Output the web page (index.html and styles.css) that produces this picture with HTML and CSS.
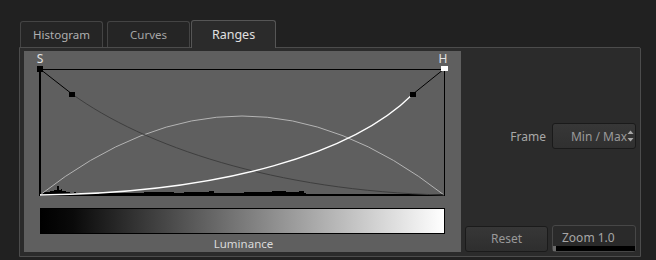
FILE: index.html
```html
<!DOCTYPE html>
<html lang="en">
<head>
  <meta charset="UTF-8" />
  <title>Ranges</title>
  <link rel="stylesheet" href="styles.css">
</head>
<body>
  <div class="tabs">
    <div class="tab">Histogram</div>
    <div class="tab">Curves</div>
    <div class="tab active">Ranges</div>
  </div>

  <div class="panel">
    <div class="graph">
      <svg class="plot" width="437" height="150" viewBox="0 0 437 150">
        <text x="16" y="12" class="lbl" text-anchor="middle">S</text>
        <text x="419" y="12" class="lbl" text-anchor="middle">H</text>

        <!-- histogram -->
        <path fill="#000" d="M16 144 L16 142 L20 142 L20 141 L26 141 L26 140 L30 140 L30 139 L33 139 L33 135 L35 135 L35 139 L37 139 L37 138 L38 138 L38 140 L42 140 L42 141 L46 141 L46 142 L50 142 L50 141 L52 141 L52 142 L56 142 L56 143 L75 143 L75 142 L120 142 L120 141 L150 141 L150 142 L160 142 L160 141 L185 141 L185 140 L190 140 L190 142 L220 142 L220 141 L248 141 L248 140 L262 140 L262 141 L275 141 L275 140 L280 140 L280 142 L282 142 L282 144 Z"/>

        <!-- box -->
        <line x1="16" y1="18.5" x2="420" y2="18.5" stroke="#000" stroke-width="1"/>
        <line x1="420.5" y1="18" x2="420.5" y2="144" stroke="#000" stroke-width="1"/>
        <line x1="16" y1="18" x2="16" y2="145" stroke="#000" stroke-width="2"/>
        <line x1="15" y1="144" x2="421" y2="144" stroke="#000" stroke-width="2"/>

        <!-- midtones -->
        <path d="M16 144 Q218 -14 420 144" fill="none" stroke="#b4b4b4" stroke-width="1"/>
        <!-- shadows -->
        <line x1="16" y1="18" x2="48" y2="43" stroke="#000" stroke-width="1"/>
        <path d="M48 43 C120 95 250 140 420 144" fill="none" stroke="#3e3e3e" stroke-width="1"/>
        <!-- highlights -->
        <path d="M16 144 C200 142 330 102 389 43" fill="none" stroke="#fff" stroke-width="1.3"/>
        <line x1="389" y1="43" x2="420" y2="18" stroke="#000" stroke-width="1"/>

        <rect x="13" y="15" width="6" height="6" fill="#000"/>
        <rect x="417" y="15" width="7" height="5" fill="#fff"/>
        <rect x="45" y="41" width="6" height="5" fill="#000"/>
        <rect x="386" y="41" width="6" height="5" fill="#000"/>
      </svg>
      <div class="ramp"></div>
      <div class="caption">Luminance</div>
    </div>

    <div class="side">
      <div class="frame-row">
        <span class="frame-label">Frame</span>
        <div class="combo">
          <span>Min / Max</span>
          <svg class="spin" width="7" height="14" viewBox="0 0 7 14">
            <path d="M0.5 5 L3.5 1.5 L6.5 5 Z" fill="#a8a8a8"/>
            <path d="M0.5 9 L3.5 12.5 L6.5 9 Z" fill="#a8a8a8"/>
          </svg>
        </div>
      </div>
      <div class="buttons">
        <div class="btn">Reset</div>
        <div class="zoom">
          <span>Zoom 1.0</span>
          <div class="zoom-bar"></div>
        </div>
      </div>
    </div>
  </div>
</body>
</html>
```

FILE: styles.css
```css
* {
  box-sizing: border-box;
  margin: 0;
  padding: 0;
}

body {
  background: #212121;
  font-family: "Noto Sans", "DejaVu Sans", sans-serif;
  font-size: 12px;
  color: #aaa;
  width: 656px;
  height: 260px;
  overflow: hidden;
}

.tabs {
  display: flex;
  align-items: flex-end;
  padding: 19px 0 0 20px;
  height: 47px;
}

.tab {
  width: 83px;
  height: 26px;
  margin-right: 4px;
  border: 1px solid #444;
  border-bottom: none;
  border-radius: 3px 3px 0 0;
  background: #252525;
  color: #b0b0b0;
  font-size: 11.5px;
  text-align: center;
  line-height: 25px;
}

.tab:nth-child(2) {
  margin-right: 1px;
  color: #a4a4a4;
}

.tab.active {
  width: 85px;
  height: 28px;
  border-color: #565656;
  background: #2b2b2b;
  color: #e0e0e0;
  font-size: 12.5px;
  line-height: 28px;
  position: relative;
  z-index: 1;
  margin-bottom: -1px;
}

.panel {
  margin-left: 19px;
  width: 622px;
  height: 210px;
  border: 1px solid #4c4c4c;
  border-radius: 0 2px 0 0;
  background: #2b2b2b;
  display: flex;
  padding: 3px 0 3px 4px;
}

.graph {
  width: 437px;
  height: 201px;
  background: #5f5f5f;
  display: flex;
  flex-direction: column;
}

.plot {
  display: block;
}

.lbl {
  font-family: "Noto Sans", "DejaVu Sans", sans-serif;
  font-size: 12px;
  fill: #e2e2e2;
}

.ramp {
  margin: 7px 0 0 16px;
  width: 405px;
  height: 26px;
  border: 1px solid #000;
  background: linear-gradient(to right, #000 0%, #0a0a0a 8%, #fff 100%);
}

.caption {
  text-align: center;
  color: #dadada;
  font-size: 11.5px;
  margin-top: 2px;
  padding-left: 2px;
}

.side {
  flex: 1;
  display: flex;
  flex-direction: column;
  padding: 0 4px 0 4px;
}

.frame-row {
  display: flex;
  align-items: center;
  justify-content: flex-end;
  margin-top: 72px;
}

.frame-label {
  color: #a8a8a8;
  margin-right: 6px;
}

.combo {
  width: 84px;
  height: 26px;
  border: 1px solid #1a1a1a;
  border-radius: 3px;
  background: linear-gradient(#373737, #303030);
  color: #9a9a9a;
  display: flex;
  align-items: center;
  justify-content: flex-end;
  padding-right: 1px;
}

.spin {
  display: block;
}

.buttons {
  margin-top: auto;
  margin-bottom: 1px;
  display: flex;
  justify-content: space-between;
  align-items: flex-end;
}

.btn {
  width: 83px;
  height: 26px;
  border: 1px solid #1b1b1b;
  border-radius: 3px;
  background: linear-gradient(#373737, #2e2e2e);
  color: #999;
  text-align: center;
  line-height: 24px;
}

.zoom {
  position: relative;
  width: 84px;
  height: 27px;
  border: 1px solid #474747;
  border-radius: 3px;
  background: #2a2a2a;
  color: #a6a6a6;
  padding-left: 9px;
  line-height: 23px;
}

.zoom-bar {
  position: absolute;
  left: 0;
  right: 0;
  bottom: 0;
  height: 5px;
  background: #000;
  border-left: 3px solid #6a6a6a;
}
```
